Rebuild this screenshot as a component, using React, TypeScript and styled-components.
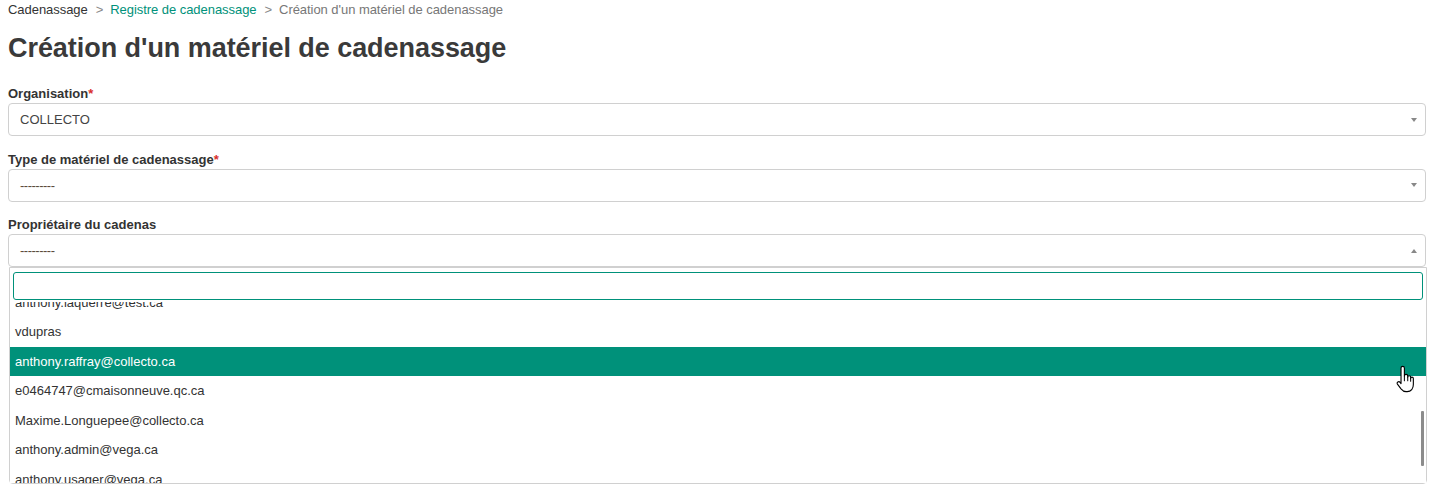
import React, { useLayoutEffect, useRef } from "react";
import styled, { createGlobalStyle } from "styled-components";

const Global = createGlobalStyle`
  html, body { margin: 0; padding: 0; background: #fff; }
  body { font-family: "Liberation Sans", Arial, sans-serif; color: #333; }
  * { box-sizing: border-box; }
`;

const Page = styled.div`
  padding: 1px 9px 0 8px;
  width: 1435px;
  height: 494px;
  overflow: hidden;
`;

const Breadcrumb = styled.nav`
  display: flex;
  align-items: center;
  font-size: 13px;
  line-height: 18px;
  height: 18px;
  letter-spacing: -0.05px;
`;

const Crumb = styled.span<{ $kind: "root" | "link" | "current" }>`
  color: ${(p) => (p.$kind === "link" ? "#00917a" : p.$kind === "current" ? "#777" : "#333")};
`;

const Sep = styled.span`
  color: #888;
  margin: 0 7px 0 8px;
`;

const Title = styled.h1`
  margin: 12px 0 19px;
  font-size: 27px;
  line-height: 34px;
  font-weight: 700;
  color: #3a3a3a;
  letter-spacing: -0.05px;
`;

const Group = styled.div`
  position: relative;
  margin-bottom: 13.5px;
`;

const Label = styled.label`
  display: block;
  font-size: 13px;
  line-height: 18px;
  padding-top: 1px;
  font-weight: 700;
  color: #333;
`;

const Req = styled.span`
  color: #d9302c;
`;

const SelectBox = styled.div`
  position: relative;
  display: flex;
  align-items: center;
  height: 33px;
  border: 1px solid #d0d0d0;
  border-radius: 4px;
  padding: 0 30px 0 11px;
  font-size: 13px;
  color: #444;
`;

const Arrow = styled.span<{ $up?: boolean }>`
  position: absolute;
  right: 8px;
  top: 50%;
  margin-top: -2px;
  width: 0;
  height: 0;
  border-left: 3px solid transparent;
  border-right: 3px solid transparent;
  ${(p) => (p.$up ? "border-bottom: 4px solid #888;" : "border-top: 4px solid #888;")}
`;

const Placeholder = styled.span`
  color: #5a4a3a;
  letter-spacing: -0.5px;
`;

const Dropdown = styled.div`
  position: absolute;
  left: 1px;
  right: -1px;
  top: 52px;
  background: #fff;
  border: 1px solid #d0d0d0;
  border-radius: 0 0 4px 4px;
  z-index: 10;
`;

const SearchWrap = styled.div`
  padding: 4px 3px 2px 3px;
`;

const SearchInput = styled.input`
  display: block;
  width: 100%;
  height: 28px;
  border: 1px solid #00917a;
  border-radius: 3px;
  outline: none;
  font-family: inherit;
  font-size: 13px;
  padding: 0 6px;
`;

const ResultsViewport = styled.div`
  position: relative;
  height: 181px;
`;

const Results = styled.ul`
  list-style: none;
  margin: 0;
  padding: 0;
  height: 100%;
  overflow: hidden;
`;

const Option = styled.li<{ $active?: boolean }>`
  padding: 6px 5px;
  font-size: 13px;
  line-height: 17.5px;
  white-space: nowrap;
  background: ${(p) => (p.$active ? "#00917a" : "#fff")};
  color: ${(p) => (p.$active ? "#fff" : "#333")};
`;

const Thumb = styled.div`
  position: absolute;
  right: 2px;
  top: 109px;
  width: 3px;
  height: 55px;
  background: #8c8c8c;
  border-radius: 1px;
`;

const Cursor = styled.svg`
  position: absolute;
  left: 1395px;
  top: 365px;
  z-index: 20;
  pointer-events: none;
`;

const options = [
  "admin@collecto.ca",
  "jean.tremblay@collecto.ca",
  "marie.gagnon@collecto.ca",
  "p.roy@collecto.ca",
  "s.cote@vega.ca",
  "l.bouchard@test.ca",
  "m.gauthier@collecto.ca",
  "j.morin@vega.ca",
  "c.lavoie@test.ca",
  "f.fortin@collecto.ca",
  "e.gagne@vega.ca",
  "anthony.laquerre@test.ca",
  "vdupras",
  "anthony.raffray@collecto.ca",
  "e0464747@cmaisonneuve.qc.ca",
  "Maxime.Longuepee@collecto.ca",
  "anthony.admin@vega.ca",
  "anthony.usager@vega.ca",
  "anthony.test@vega.ca",
  "r.pelletier@collecto.ca",
];

const ACTIVE = "anthony.raffray@collecto.ca";

export default function App() {
  const listRef = useRef<HTMLUListElement>(null);
  useLayoutEffect(() => {
    if (listRef.current) listRef.current.scrollTop = 338.5;
  }, []);

  return (
    <Page>
      <Global />
      <Breadcrumb>
        <Crumb $kind="root">Cadenassage</Crumb>
        <Sep>&gt;</Sep>
        <Crumb $kind="link">Registre de cadenassage</Crumb>
        <Sep>&gt;</Sep>
        <Crumb $kind="current">Création d'un matériel de cadenassage</Crumb>
      </Breadcrumb>
      <Title>Création d'un matériel de cadenassage</Title>

      <Group>
        <Label>
          Organisation<Req>*</Req>
        </Label>
        <SelectBox>
          COLLECTO
          <Arrow />
        </SelectBox>
      </Group>

      <Group>
        <Label>
          Type de matériel de cadenassage<Req>*</Req>
        </Label>
        <SelectBox>
          <Placeholder>---------</Placeholder>
          <Arrow />
        </SelectBox>
      </Group>

      <Group>
        <Label>Propriétaire du cadenas</Label>
        <SelectBox>
          <Placeholder>---------</Placeholder>
          <Arrow $up />
        </SelectBox>
        <Dropdown>
          <SearchWrap>
            <SearchInput type="search" />
          </SearchWrap>
          <ResultsViewport>
            <Results ref={listRef}>
              {options.map((o) => (
                <Option key={o} $active={o === ACTIVE}>
                  {o}
                </Option>
              ))}
            </Results>
            <Thumb />
          </ResultsViewport>
        </Dropdown>
      </Group>

      <Cursor width="21" height="28" viewBox="0 0 18 25">
        <path
          d="M6.5 1.2 C7.3 1.2 8 1.9 8 2.7 V9.8 C8 9 8.7 8.4 9.5 8.4 C10.3 8.4 11 9 11 9.8 V10.8 C11 10.1 11.6 9.6 12.3 9.6 C13 9.6 13.6 10.1 13.6 10.8 V11.8 C13.6 11.2 14.2 10.8 14.8 10.8 C15.5 10.8 16 11.3 16 12 V17.5 C16 21 14 23.8 10.5 23.8 H9.5 C7.5 23.8 6.2 22.8 5 21.3 L1.8 17.1 C1.3 16.4 1.5 15.5 2.2 15.1 C2.9 14.7 3.7 14.9 4.2 15.5 L5 16.6 V2.7 C5 1.9 5.7 1.2 6.5 1.2 Z"
          fill="#fff"
          stroke="#000"
          strokeWidth="1"
          strokeLinejoin="round"
        />
        <path d="M8 9.8 V14 M11 10.8 V14 M13.6 11.8 V14.5" stroke="#000" strokeWidth="0.9" strokeLinecap="round" fill="none" />
      </Cursor>
    </Page>
  );
}
